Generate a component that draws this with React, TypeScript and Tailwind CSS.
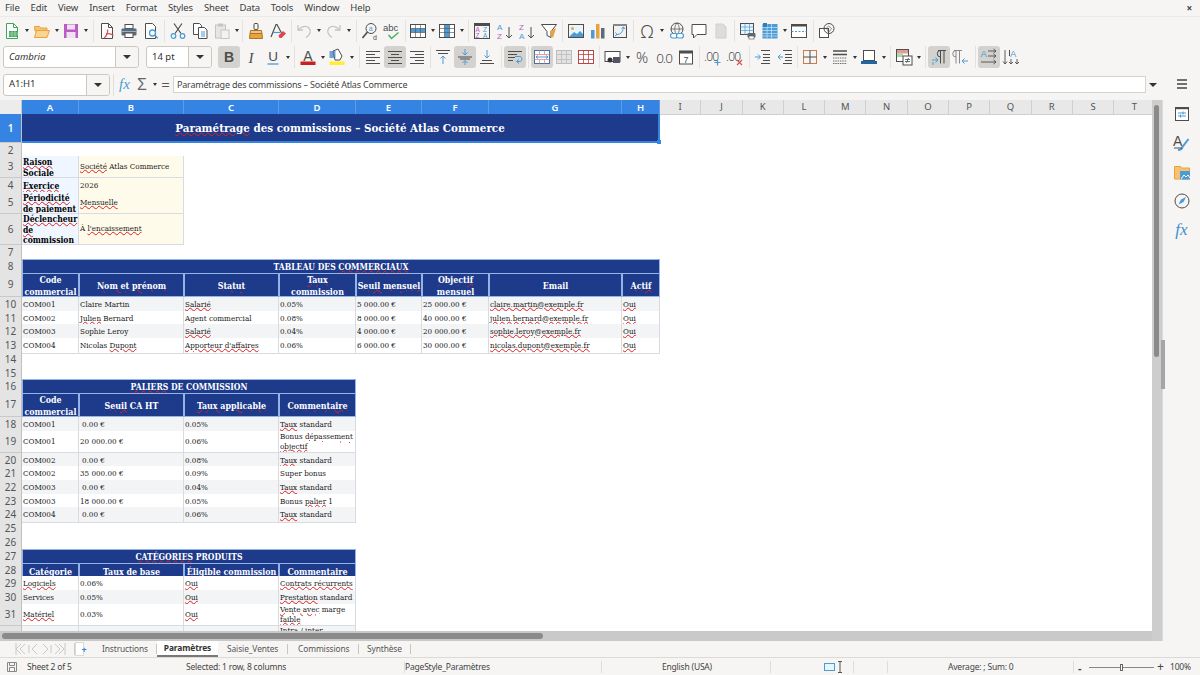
import React from "react";

const G = "#4d4d4d", B = "#4a9bd6", O = "#e8a33d", L = "#c4c4c4";

function Ic({ children, s = 18 }: { children: React.ReactNode; s?: number }) {
  return <svg width={s} height={s} viewBox="0 0 18 18" fill="none" strokeWidth="1" className="overflow-visible">{children}</svg>;
}

const icons: Record<string, React.ReactNode> = {
  new: <><path d="M3.5 1.5h7l4 4v11h-11z" stroke="#3fa45b" fill="#fff" /><path d="M10.5 1.5v4h4" stroke="#3fa45b" /><rect x="6" y="9" width="9" height="6" fill="#3fa45b" /><path d="M6 11h9M6 13h9M9 9v6M12 9v6" stroke="#bfe6c8" strokeWidth=".6" /></>,
  open: <><path d="M1.5 4.5h5l1.5 1.5h6v3h-12z" fill="#f6c272" stroke={O} /><path d="M1.5 15.5l2-7h13l-2.5 7z" fill="#fbd493" stroke={O} /></>,
  save: <><rect x="2" y="2" width="14" height="14" fill="#b95cc4" /><rect x="5" y="2.5" width="8" height="5" fill="#f3dff5" /><rect x="4.5" y="10" width="9" height="6" fill="#f3dff5" /></>,
  pdf: <><path d="M3.5 1.5h7l4 4v11h-11z" stroke={G} fill="#fff" /><path d="M10.5 1.5v4h4" stroke={G} /><path d="M6 16c3-2 4-6 3.5-8.5M8 12c2-.5 5-.5 7.5 1.5" stroke="#d9534f" strokeWidth="1.3" /></>,
  print: <><rect x="5" y="2.5" width="8" height="4" stroke={G} fill="#fff" /><rect x="1.5" y="6.5" width="15" height="7" rx="1" fill="#5e6a75" /><rect x="5" y="11" width="8" height="4.5" fill="#fff" stroke={G} /><path d="M1.5 9.5h15" stroke="#88b5d6" /></>,
  preview: <><path d="M3.5 1.5h7l3 3v12h-10z" stroke={G} fill="#fff" /><circle cx="10.5" cy="11" r="3" stroke={B} strokeWidth="1.3" /><path d="M12.7 13.2l3 3" stroke={B} strokeWidth="1.5" /></>,
  cut: <><path d="M5 1.5l7 10M13 1.5l-7 10" stroke={G} strokeWidth="1.2" /><circle cx="4.5" cy="14" r="2.3" stroke={B} strokeWidth="1.2" /><circle cx="13.5" cy="14" r="2.3" stroke={B} strokeWidth="1.2" /></>,
  copy: <><path d="M2.5 1.5h6l2 2v9h-8z" stroke={G} fill="#fff" /><path d="M7.5 5.5h6l2.5 2.5v8.500h-8.500z" stroke={G} fill="#fff" /><path d="M10 10h4M10 12h4M10 14h4" stroke={B} /></>,
  paste: <><rect x="2.500" y="3" width="10" height="13" stroke={L} fill="#e6e6e6" /><rect x="5" y="1.500" width="5" height="3" fill={L} /><rect x="8" y="8" width="8" height="8.500" fill="#f2f2f2" stroke={L} /></>,
  clone: <><rect x="7" y="1.500" width="4" height="6" rx="1" stroke={G} /><path d="M3.500 8.500h11l.5 3h-12z" fill="#f3c374" stroke="#a9762b" /><path d="M3 11.500h12l.5 5h-13z" fill={O} stroke="#a9762b" /></>,
  clear: <><path d="M2 15L7 2.500h1L13 12" stroke={G} strokeWidth="1.2" /><path d="M4 10.500h7" stroke={B} strokeWidth="1.2" /><path d="M9.500 13.500l4.500-4.500 3 2.500-4.500 4.500h-2z" fill="#e0444f" /></>,
  undo: <><path d="M3 3v5h5" stroke={L} strokeWidth="1.3" /><path d="M3.500 8C6 4.500 11 3 14 6c2.500 3 1 7-3 9.500" stroke={L} strokeWidth="1.3" /></>,
  redo: <><path d="M15 3v5h-5" stroke={L} strokeWidth="1.3" /><path d="M14.500 8C12 4.500 7 3 4 6c-2.500 3-1 7 3 9.500" stroke={L} strokeWidth="1.3" /></>,
  find: <><circle cx="10" cy="6.500" r="5" stroke={G} /><path d="M6.500 10l-5 6" stroke={G} strokeWidth="1.6" /><text x="7.800" y="9" fontSize="7" fill={B} className="font-['Liberation_Sans']">a</text><text x="12" y="17.500" fontSize="7" fill={G} className="font-['Liberation_Sans']">d</text></>,
  abc: <><text x="0" y="9" fontSize="9.500" fill={G} className="font-['Liberation_Sans']">abc</text><path d="M5.500 13l3 3.500 7-6" stroke="#4bb05f" strokeWidth="1.500" /></>,
  row: <><rect x="1.500" y="2.500" width="15" height="13" stroke={G} fill="#fff" /><rect x="2" y="6.500" width="14" height="4" fill={B} /><path d="M1.500 6.500h15M1.500 10.500h15M6.500 2.500v13M11.500 2.500v13" stroke={G} strokeWidth=".6" /></>,
  col: <><rect x="1.500" y="2.500" width="15" height="13" stroke={G} fill="#fff" /><rect x="6.500" y="3" width="5" height="12" fill={B} /><path d="M1.500 6.500h15M1.500 10.500h15M6.500 2.500v13M11.500 2.500v13" stroke={G} strokeWidth=".6" /></>,
  sort: <><rect x="1.500" y="1.500" width="15" height="15" stroke={G} /><rect x="1.500" y="1.500" width="15" height="2.500" fill={G} /><text x="2.500" y="10" fontSize="6.500" fill="#b85bc0" className="font-['Liberation_Sans']">A</text><text x="2.500" y="16" fontSize="6.500" fill="#b85bc0" className="font-['Liberation_Sans']">Z</text><text x="10" y="10" fontSize="6.500" fill={B} className="font-['Liberation_Sans']">Z</text><text x="10" y="16" fontSize="6.500" fill={B} className="font-['Liberation_Sans']">A</text></>,
  az: <><text x="1" y="8" fontSize="8" fill={B} className="font-['Liberation_Sans']">A</text><text x="1" y="16.500" fontSize="8" fill="#b85bc0" className="font-['Liberation_Sans']">Z</text><path d="M13 5v11M10 13l3 3 3-3" stroke={G} /></>,
  za: <><text x="1" y="8" fontSize="8" fill="#b85bc0" className="font-['Liberation_Sans']">Z</text><text x="1" y="16.500" fontSize="8" fill={B} className="font-['Liberation_Sans']">A</text><path d="M13 5v11M10 13l3 3 3-3" stroke={G} /></>,
  filter: <><path d="M1.500 2.500h15l-5.500 7v6l-4-2v-4z" stroke={G} fill="#fff" /><path d="M10 9l6-3-3 10-2-3z" fill={O} /></>,
  image: <><rect x="1.500" y="2.500" width="15" height="13" stroke={G} fill="#eaf4fb" /><circle cx="5.500" cy="6.500" r="1.500" fill={O} /><path d="M2 15l5-5 3 2 3-3 3 3v3z" fill={B} /></>,
  chart: <><rect x="2" y="8" width="3.500" height="8.500" fill={B} /><rect x="7" y="2" width="3.500" height="14.500" fill={O} /><rect x="12" y="6" width="3.500" height="10.500" fill="#5e6a75" /></>,
  pivot: <><rect x="2.500" y="2.500" width="13" height="13" stroke={G} fill="#f1f1f1" /><rect x="2" y="2" width="14" height="2" fill="#888" /><path d="M5.500 12.500c4 0 6-2 7-7M10.500 6.500l2-1.500 1.500 2M4.500 10.500l1.500 2-2 1.500" stroke={B} /></>,
  omega: <><text x="9" y="15.500" textAnchor="middle" fontSize="18" fill={G} className="font-['Noto_Sans'] font-light">Ω</text></>,
  link: <><circle cx="9" cy="7" r="6" stroke={G} /><path d="M3 7h12M9 1c-3 3-3 9 0 12M9 1c3 3 3 9 0 12" stroke={G} strokeWidth=".7" /><rect x="2.500" y="11.500" width="7" height="4.500" rx="2.200" stroke={B} fill="#fff" strokeWidth="1.200" /><rect x="8.500" y="11.500" width="7" height="4.500" rx="2.200" stroke={B} fill="#fff" strokeWidth="1.200" /></>,
  comment: <path d="M2 2.500h14v10H7l-3.500 3.500v-3.500H2z" stroke={G} fill="#fff" />,
  note: <path d="M4 2h7l3 3v11H4z" fill="#dcdcdc" stroke="#cfcfcf" />,
  area: <><rect x="1.500" y="1.500" width="13" height="11" stroke={G} fill="#eaf4fb" /><path d="M1.500 5h13M1.500 8.500h13M6 1.500v11M10.500 1.500v11" stroke={B} strokeWidth=".7" /><rect x="8.500" y="11" width="8" height="4.500" rx="1" fill="#5e6a75" /><rect x="10" y="14" width="5" height="3" fill="#fff" stroke={G} strokeWidth=".6" /></>,
  freeze: <><rect x="1.500" y="2" width="15" height="14.500" fill={B} /><path d="M1.500 5.500h15M1.500 8.500h15M1.500 11.500h15M1.500 14h15M6 2v14.500M10.500 2v14.500" stroke="#cfe5f5" strokeWidth=".7" /><rect x="2" y="1" width="4" height="4" fill="#2c7fb8" /></>,
  split: <><rect x="1.500" y="2.500" width="15" height="13" stroke={G} fill="#fff" /><rect x="1.500" y="2" width="15" height="2.500" fill={G} /><path d="M1.500 9.500h15" stroke={B} strokeDasharray="2 1.500" /></>,
  shape: <><rect x="1.500" y="6.500" width="9" height="9" stroke={G} fill="#fff" /><circle cx="11" cy="6.500" r="5" stroke={G} fill="none" /><path d="M8.500 6l2-2 3 2.500-3 4z" stroke={G} strokeWidth=".6" /></>,
  left: <path d="M2 3.500h14M2 6.500h9M2 9.500h14M2 12.500h9M2 15.500h14" stroke={G} />,
  center: <path d="M2 3.500h14M5 6.500h8M2 9.500h14M5 12.500h8M2 15.500h14" stroke={G} />,
  right: <path d="M2 3.500h14M7 6.500h9M2 9.500h14M7 12.500h9M2 15.500h14" stroke={G} />,
  top: <><path d="M2 2.500h14M4 5.500h10" stroke={G} /><path d="M9 16V8M6.500 10.500L9 8l2.500 2.500" stroke={B} /></>,
  mid: <><path d="M2 9h14M4 11h10" stroke={G} /><path d="M9 1v5.500M6.500 4.500L9 7l2.500-2.500M9 17v-4M6.500 15L9 12.500l2.500 2.500" stroke={B} /></>,
  bottom: <><path d="M4 12.500h10M2 15.500h14" stroke={G} /><path d="M9 2v8M6.500 7.500L9 10l2.500-2.500" stroke={B} /></>,
  wrap: <><path d="M2 3.500h14M2 6.500h9M2 9.500h7M2 12.500h5" stroke={G} /><path d="M9 9.500h5c2.500 0 2.500 5 0 5h-3M13 12.500l-2.500 2 2.500 2" stroke={B} transform="translate(0 -1)" /></>,
  merge: <><rect x="1.500" y="2.500" width="15" height="13" stroke="#4a6fa5" fill="#fff" /><path d="M1.500 6.500h15M1.500 11.500h15M6.500 2.500v4M11.500 2.500v4M6.500 11.500v4M11.500 11.500v4" stroke="#e08a8a" strokeWidth=".8" /><path d="M3 9h12M5 7.500L3 9l2 1.500M13 7.500L15 9l-2 1.500" stroke={B} /></>,
  merge2: <><rect x="1.500" y="2.500" width="15" height="13" fill="#e2e2e2" stroke="#bdbdbd" /><path d="M1.500 6.500h15M1.500 11.500h15M6.500 2.500v13M11.500 2.500v13" stroke="#bdbdbd" strokeWidth=".8" /></>,
  merge3: <><rect x="1.500" y="2.500" width="15" height="13" fill="#fff" stroke="#b44" /><path d="M1.500 6.500h15M1.500 11.500h15M6.500 2.500v13M11.500 2.500v13" stroke="#b44" strokeWidth=".8" /></>,
  curr: <><rect x="1" y="3.500" width="15" height="10" stroke={G} fill="#fff" /><circle cx="6" cy="12" r="2.500" fill="#333" /><rect x="9" y="9" width="7" height="6" fill="#556" /></>,
  pct: <text x="9" y="14.500" textAnchor="middle" fontSize="15" fill={G} className="font-['Noto_Sans'] font-light">%</text>,
  num: <text x="9" y="14.500" textAnchor="middle" fontSize="13.500" letterSpacing="-1" fill={G} className="font-['Noto_Sans'] font-light">0.0</text>,
  date: <><rect x="2.500" y="3" width="13" height="13" stroke={G} fill="#fff" /><rect x="2.500" y="3" width="13" height="2.500" fill={G} /><text x="9" y="14.500" textAnchor="middle" fontSize="9" fill={G} className="font-['Liberation_Sans']">7</text></>,
  addd: <><text x="0" y="13" fontSize="12" letterSpacing="-.8" fill={G} className="font-['Noto_Sans'] font-light">.00</text><path d="M13.500 11.500v6M10.500 14.500h6" stroke={B} strokeWidth="1.200" /></>,
  deld: <><text x="0" y="13" fontSize="12" letterSpacing="-.8" fill={G} className="font-['Noto_Sans'] font-light">.00</text><path d="M11 12l5 5M16 12l-5 5" stroke="#d9534f" strokeWidth="1.200" /></>,
  indent: <><path d="M7 2.500h9M9 6.500h7M9 9.500h7M9 12.500h7M7 15.500h9" stroke={G} /><path d="M1 9h5M4 6.500L6.500 9 4 11.500" stroke={B} /></>,
  outdent: <><path d="M7 2.500h9M9 6.500h7M9 9.500h7M9 12.500h7M7 15.500h9" stroke={G} /><path d="M7 9H2M4.500 6.500L2 9l2.500 2.500" stroke={B} /></>,
  borders: <><rect x="2.500" y="2.500" width="13" height="13" stroke="#c87d4a" /><path d="M2.500 9h13M9 2.500v13" stroke={G} /></>,
  lines: <><path d="M2 3h14M2 6.500h14" stroke={G} strokeWidth="1.500" /><path d="M2 10h14M2 13h14M2 15.500h14" stroke={G} strokeWidth=".8" strokeDasharray="1.500 .8" /></>,
  bcolor: <><rect x="3.500" y="2.500" width="11" height="10" stroke={G} fill="#fff" /><rect x="1" y="13" width="16" height="3" fill="#1f66a8" /></>,
  cond: <><rect x="1.500" y="1.500" width="12" height="12" stroke={G} fill="#fff" /><rect x="2" y="2" width="11" height="3.500" fill="#e59a9a" /><rect x="2" y="5.500" width="6" height="3.500" fill="#a7d8a7" /><rect x="8" y="8" width="9" height="9" fill="#fff" stroke={G} /><path d="M10 11.500h5M10 13.500h5M13.500 10l-2 5" stroke={G} strokeWidth=".8" /></>,
  ltr: <><path d="M8 2.500h8M10.500 2.500v13M14 2.500v13M10.500 2.500a3 3 0 000 6.500" stroke={G} /><path d="M2 12h6M5.500 9.500L8 12l-2.500 2.500M3 14v3" stroke={B} /></>,
  rtl: <><path d="M2 2.500h8M4 2.500v13M7.500 2.500v13M4 2.500a3 3 0 000 6.500" stroke="#888" /><path d="M16 13h-6M12.500 10.500L10 13l2.500 2.500" stroke={B} /></>,
  hd: <><text x="0.500" y="9" fontSize="9.500" fill={B} className="font-['Liberation_Sans']">A</text><path d="M8 3h8M13.500 1l2.500 2-2.500 2M8 8h8M13.500 6l2.500 2-2.500 2M1 14h15M13.500 12l2.500 2-2.500 2" stroke={G} strokeWidth=".9" /></>,
  vd: <><text x="8" y="9" fontSize="9.500" fill={B} className="font-['Liberation_Sans']">A</text><path d="M3 2v14M1 13.500L3 16l2-2.500M9 11v5M7 14l2 2 2-2M15 11v5M13 14l2 2 2-2" stroke={G} strokeWidth=".9" /><path d="M7.500 2v6" stroke={G} /></>,
};

icons.i = <text x="9" y="14.500" textAnchor="middle" fontSize="15" fill={G} className="font-['Liberation_Serif'] italic">I</text>;
icons.u = <><text x="9" y="13" textAnchor="middle" fontSize="13.500" fill={G} className="font-['Liberation_Sans']">U</text><path d="M3.500 16h11" stroke={B} strokeWidth="1.300" /></>;
icons.b = <text x="9" y="14" textAnchor="middle" fontSize="14" fontWeight="700" fill={G} className="font-['Liberation_Sans']">B</text>;
icons.color = <><text x="9" y="12.500" textAnchor="middle" fontSize="14" fill={G} className="font-['Liberation_Sans']">A</text><rect x="1.500" y="13.500" width="15" height="3.500" fill="#c9211e" /></>;
icons.hl = <><path d="M5 3l5-2 4 7-2 4H7z" fill="#fff" stroke={G} /><rect x="1.500" y="3" width="6" height="7" fill="#3c7fc0" opacity=".7" /><rect x="1.500" y="13.500" width="15" height="3.500" fill="#ffee33" /></>;

const row1 = ["new", "d", "open", "d:7", "save", "d", "s:6", "pdf", "print", "preview", "s", "cut", "copy", "paste", "d:7", "s", "clone", "clear", "s:4", "undo", "d", "redo", "d", "s:6", "find", "abc", "s:4", "row", "d:7", "col", "d:7", "s:6", "sort", "g", "az", "za", "filter", "s", "image", "chart", "pivot", "s", "omega", "d:7", "g", "link", "comment", "note", "s", "area", "freeze", "d:7", "split", "s:6", "shape"];
const row2a = ["i", "u", "d", "s:4", "g", "color", "d:7", "hl", "d", "s:6", "left", "center:on", "right", "s:4", "top", "mid:on", "bottom", "s:6", "wrap:on", "s", "merge:on", "merge2", "merge3", "s", "curr", "d:7", "pct", "num", "date", "s", "addd", "deld", "s:6", "indent", "outdent", "s:3", "borders", "d", "lines", "d:7", "bcolor", "d", "s", "cond", "d:7", "s:6", "ltr:on", "rtl", "s:6", "hd:on", "vd"];

function ToolRow({ items }: { items: string[] }) {
  return (
    <>
      {items.map((t, i) => {
        const [k, a] = t.split(":");
        if (k === "d") return <Dd key={i} w={a} />;
        if (k === "s") return <Sep key={i} w={a} />;
        if (k === "g") return <div key={i} className="w-px shrink-0" />;
        return (
          <div key={i} className={`flex h-[22px] w-[22px] shrink-0 items-center justify-center rounded-[3px] ${a === "on" ? "bg-[#d4d2cf]" : ""}`}>
            <Ic>{icons[k]}</Ic>
          </div>
        );
      })}
    </>
  );
}

function Dd({ w }: { w?: string }) {
  return (
    <div className={`flex shrink-0 items-center justify-center ${w === "7" ? "w-[7px]" : "w-2"}`}>
      <div className="h-0 w-0 border-x-[2.500px] border-t-[3px] border-x-transparent border-t-[#333]" />
    </div>
  );
}

function Sep({ w }: { w?: string }) {
  const c = w === "3" ? "w-[3px]" : w === "4" ? "w-1" : w === "6" ? "w-[6px]" : w === "7" ? "w-[7px]" : "w-[5px]";
  return (
    <div className={`flex h-[22px] shrink-0 justify-center ${c}`}>
      <div className="h-full w-px bg-[#e4e2df]" />
    </div>
  );
}

function Caret() {
  return <div className="h-0 w-0 border-x-[4px] border-t-[4px] border-x-transparent border-t-[#333]" />;
}

function Combo({ text, w, bw, italic, tw }: { text: string; w: string; bw: string; italic?: boolean; tw: string }) {
  return (
    <div className={`flex h-[22px] shrink-0 rounded-[3px] border border-[#cdc7c2] bg-white ${w}`}>
      <div className={`flex items-center pl-[5px] text-[9.500px] text-[#333] ${tw} ${italic ? "italic" : ""}`}>{text}</div>
      <div className={`flex items-center justify-center rounded-r-[3px] border-l border-[#cdc7c2] bg-[#f6f5f4] ${bw}`}><Caret /></div>
    </div>
  );
}

function spell(s: string) {
  return s.split("~").map((p, i) =>
    i % 2 ? <span key={i} className="underline decoration-[#e02020] decoration-wavy decoration-[0.6px] underline-offset-[0px]">{p}</span> : <React.Fragment key={i}>{p}</React.Fragment>
  );
}

const GRID = "grid grid-cols-[22px_57px_105px_95px_77px_66px_67px_133px_38px]";
const SERIF = "font-['DejaVu_Serif_Condensed','Liberation_Serif',serif]";

function Head({ n, on }: { n: number; on?: boolean }) {
  return (
    <div className={`flex items-center justify-center border-b border-r border-b-[#c9c9c9] border-r-[#c0c0c0] font-['Noto_Sans'] text-[10px] ${on ? "bg-[#3584e4] font-semibold text-white" : "bg-[#e4e4e4] text-[#555]"}`}>{n}</div>
  );
}

function Cell({ t, k = "d", alt, span }: { t?: string; k?: string; alt?: boolean; span?: string }) {
  const base = `overflow-hidden ${SERIF} leading-[10.500px] `;
  if (k === "s")
    return <div className={`${base} flex items-center justify-center border border-[#93b4e6] bg-[#1e3a8a] text-center text-[8.500px] font-bold text-white ${span ?? ""}`}><span>{spell(t ?? "")}</span></div>;
  if (k === "h")
    return <div className={`${base} flex items-center justify-center border border-[#93b4e6] bg-[#1e3a8a] pt-[1px] text-center text-[8.800px] font-bold leading-[12px] text-white ${span ?? ""}`}><span>{spell(t ?? "")}</span></div>;
  if (k === "l")
    return <div className={`${base} flex items-center border-b border-r border-[#d8dce2] bg-[#eff6ff] pl-[1px] pt-[2px] text-[8.500px] font-bold text-black`}><span>{spell(t ?? "")}</span></div>;
  const bg = k === "v" ? "bg-[#fffbeb]" : alt ? "bg-[#f3f4f6]" : "bg-white";
  return <div className={`${base} flex items-center border-b border-r border-[#d8dce2] pl-[1px] pt-[1px] text-[8px] text-[#1a1a1a] ${bg} ${k === "r" ? "pl-[3px]" : ""}`}><span>{spell(t ?? "")}</span></div>;
}

function R({ n, h, on, children }: { n: number; h: string; on?: boolean; children?: React.ReactNode }) {
  return (
    <div className={`${GRID} ${h} shrink-0`}>
      <Head n={n} on={on} />
      {children}
    </div>
  );
}

function Cells({ v, alt, h }: { v: string[]; alt?: boolean; h?: boolean }) {
  return <>{v.map((t, i) => <Cell key={i} t={t} alt={alt} k={h ? "h" : t.startsWith(" ") ? "r" : "d"} />)}</>;
}

const colLabels = ["A", "B", "C", "D", "E", "F", "G", "H"];
const colRest = ["I", "J", "K", "L", "M", "N", "O", "P", "Q", "R", "S", "T"];

function Sheet() {
  return (
    <div className="flex min-h-0 flex-1 flex-col overflow-hidden bg-white">
      <div className="grid h-[14px] shrink-0 grid-cols-[22px_57px_105px_95px_77px_66px_67px_133px_38px_repeat(12,41.300px)] font-['Noto_Sans'] text-[9.500px]">
        <div className="border-b border-r border-[#c9c9c9] bg-[#ececec]" />
        {colLabels.map(c => <div key={c} className="flex items-center justify-center border-r border-[#5c9bea] bg-[#3584e4] font-semibold text-white">{c}</div>)}
        {colRest.map(c => <div key={c} className="flex items-center justify-center border-b border-r border-[#cfcfcf] bg-[#e8e8e8] text-[#555]">{c}</div>)}
      </div>

      <R n={1} h="h-[29px]" on>
        <div className={`relative col-span-8 flex items-center justify-center border-b-2 border-r-2 border-[#3584e4] bg-[#1e3a8a] pt-[2px] ${SERIF} text-[11.500px] font-bold text-white`}>
          <span>{spell("~Paramétrage~ des commissions – Société Atlas Commerce")}</span>
          <div className="absolute bottom-[-3px] right-[-3px] h-[4px] w-[4px] bg-[#3584e4]" />
        </div>
      </R>
      <R n={2} h="h-[13px]" />
      <R n={3} h="h-[22px]"><Cell k="l" t="~Raison~ ~Sociale~" /><Cell k="v" t="~Société~ Atlas Commerce" /></R>
      <R n={4} h="h-[14px]"><Cell k="l" t="~Exercice~" /><Cell k="v" t="2026" /></R>
      <R n={5} h="h-[22px]"><Cell k="l" t="~Périodicité~ ~de paiement~" /><Cell k="v" t="~Mensuelle~" /></R>
      <R n={6} h="h-[31px]"><Cell k="l" t="~Déclencheur~ ~de~ commission" /><Cell k="v" t="À ~l'encaissement~" /></R>
      <R n={7} h="h-[14px]" />
      <R n={8} h="h-[14px]"><Cell k="s" span="col-span-8" t="TABLEAU DES ~COMMERCIAUX~" /></R>
      <R n={9} h="h-[24px]"><Cells h v={["Code commercial", "~Nom et prénom~", "~Statut~", "~Taux~ commission", "~Seuil\u00a0mensuel~", "~Objectif mensuel~", "Email", "~Actif~"]} /></R>
      <R n={10} h="h-[14px]"><Cells alt v={["COM001", "Claire Martin", "~Salarié~", "0.05%", "5 000.00 €", "25 000.00 €", "~claire.martin@exemple.fr~", "~Oui~"]} /></R>
      <R n={11} h="h-[13px]"><Cells v={["COM002", "~Julien~ Bernard", "Agent commercial", "0.08%", "8 000.00 €", "40 000.00 €", "~julien.bernard@exemple.fr~", "~Oui~"]} /></R>
      <R n={12} h="h-[14px]"><Cells alt v={["COM003", "Sophie Leroy", "~Salarié~", "0.04%", "4 000.00 €", "20 000.00 €", "~sophie.leroy@exemple.fr~", "~Oui~"]} /></R>
      <R n={13} h="h-[14px]"><Cells v={["COM004", "Nicolas ~Dupont~", "~Apporteur d'affaires~", "0.06%", "6 000.00 €", "30 000.00 €", "~nicolas.dupont@exemple.fr~", "~Oui~"]} /></R>
      <R n={14} h="h-[14px]" />
      <R n={15} h="h-[13px]" />
      <R n={16} h="h-[14px]"><Cell k="s" span="col-span-4" t="~PALIERS~ DE COMMISSION" /></R>
      <R n={17} h="h-[24px]"><Cells h v={["Code commercial", "~Seuil~ CA HT", "~Taux applicable~", "~Commentaire~"]} /></R>
      <R n={18} h="h-[14px]"><Cells alt v={["COM001", " 0.00 €", "0.05%", "~Taux~ standard"]} /></R>
      <R n={19} h="h-[22px]"><Cells v={["COM001", "20 000.00 €", "0.06%", "Bonus\u00a0~dépassement~ ~objectif~"]} /></R>
      <R n={20} h="h-[13px]"><Cells alt v={["COM002", " 0.00 €", "0.08%", "~Taux~ standard"]} /></R>
      <R n={21} h="h-[14px]"><Cells v={["COM002", "35 000.00 €", "0.09%", "Super bonus"]} /></R>
      <R n={22} h="h-[14px]"><Cells alt v={["COM003", " 0.00 €", "0.04%", "~Taux~ standard"]} /></R>
      <R n={23} h="h-[13px]"><Cells v={["COM003", "18 000.00 €", "0.05%", "Bonus ~palier~ 1"]} /></R>
      <R n={24} h="h-[14px]"><Cells alt v={["COM004", " 0.00 €", "0.06%", "~Taux~ standard"]} /></R>
      <R n={25} h="h-[14px]" />
      <R n={26} h="h-[14px]" />
      <R n={27} h="h-[14px]"><Cell k="s" span="col-span-4" t="~CATÉGORIES~ PRODUITS" /></R>
      <R n={28} h="h-[13px]"><Cells h v={["~Catégorie~", "~Taux de base~", "~Éligible~\u00a0commission", "~Commentaire~"]} /></R>
      <R n={29} h="h-[14px]"><Cells v={["~Logiciels~", "0.06%", "~Oui~", "~Contrats récurrents~"]} /></R>
      <R n={30} h="h-[14px]"><Cells alt v={["Services", "0.05%", "~Oui~", "~Prestation~ standard"]} /></R>
      <R n={31} h="h-[22px]"><Cells v={["~Matériel~", "0.03%", "~Oui~", "~Vente avec~ marge ~faible~"]} /></R>
      <div className={`${GRID} h-[31px] shrink-0`}>
        <Head n={32} />
        <Cell alt />
        <Cell alt />
        <Cell alt />
        <div className={`overflow-hidden border-b border-r border-[#d8dce2] bg-[#f3f4f6] pl-[1px] ${SERIF} text-[8px] leading-[10.500px] text-[#1a1a1a]`}>Intra / inter</div>
      </div>
    </div>
  );
}

function TabSep() {
  return <div className="h-[10px] w-px shrink-0 bg-[#c8c6c3]" />;
}

function Nav({ d }: { d: string }) {
  return <svg width="13" height="14" viewBox="0 0 13 14" fill="none" stroke="#c9c9c9"><path d={d} /></svg>;
}

export default function App() {
  return (
    <div className="flex h-[675px] w-[1200px] flex-col overflow-hidden bg-[#f6f5f4] font-['Noto_Sans'] text-[#3d3d3d]">
      {/* menu */}
      <div className="flex h-[17px] shrink-0 items-center border-b border-[#eceae8] pl-[5px] pr-[8px] pt-[1px] text-[9.500px] tracking-[-0.15px]">
        <div className="flex gap-[11px]">
          {["File", "Edit", "View", "Insert", "Format", "Styles", "Sheet", "Data", "Tools", "Window", "Help"].map(m => <span key={m}>{m}</span>)}
        </div>
        <span className="ml-auto text-[10px] font-bold">×</span>
      </div>
      {/* toolbar 1 */}
      <div className="flex h-[27px] shrink-0 items-center pl-px"><ToolRow items={row1} /></div>
      {/* toolbar 2 */}
      <div className="flex h-[26px] shrink-0 items-center pl-[3px]">
        <Combo text="Cambria" w="w-[136px]" bw="w-[23px]" tw="w-[112px]" italic />
        <div className="w-[7px] shrink-0" />
        <Combo text="14 pt" w="w-[66px]" bw="w-[23px]" tw="w-[42px]" />
        <div className="w-[6px] shrink-0" />
        <ToolRow items={["b:on"]} />
        <ToolRow items={row2a} />
      </div>
      {/* formula */}
      <div className="flex h-[30px] shrink-0 items-center pb-[1px] pl-[3px]">
        <Combo text="A1:H1" w="w-[107px]" bw="w-[23px]" tw="w-[83px]" />
        <div className="ml-[3px] h-[22px] w-px bg-[#e0dedb]" />
        <div className="flex w-[19px] justify-center pl-[2px] font-['Liberation_Serif'] text-[15px] italic text-[#4a9bd6]">fx</div>
        <div className="flex w-[18px] justify-center font-['Liberation_Sans'] text-[16px] text-[#666]">Σ</div>
        <Dd w="7" />
        <div className="flex w-[15px] justify-center text-[15px] text-[#555]">=</div>
        <div className="flex h-[17px] w-[973px] items-center border border-[#d6d3cf] bg-white pl-[3px] text-[9px] tracking-[-0.2px] text-[#444]">Paramétrage des commissions – Société Atlas Commerce</div>
        <div className="flex w-[13px] justify-center"><Caret /></div>
      </div>
      {/* middle */}
      <div className="flex min-h-0 flex-1">
        <div className="flex w-[1152px] min-w-0 flex-col">
          <Sheet />
          <div className="flex h-[10px] shrink-0 items-center bg-[#c9c9c9] pl-[2px]"><div className="h-[6px] w-[541px] rounded-[3px] bg-[#8a8a8a]" /></div>
        </div>
        <div className="relative w-[10px] shrink-0 bg-[#cdcdcd]">
          <div className="ml-[2px] mt-[5px] h-[252px] w-[5px] rounded-[3px] bg-[#8a8a8a]" />
          <div className="absolute left-[9px] top-[240px] h-[49px] w-[4px] bg-[#a5a5a5]" />
        </div>
        <div className="flex w-[38px] shrink-0 flex-col items-center border-l border-[#dcdad7]">
          <div className="-mt-[23px] flex flex-col items-center">
            <svg width="14" height="14" viewBox="0 0 14 14" stroke="#444" strokeWidth="1.300"><path d="M2 3h10M2 7h10M2 11h10" /></svg>
            <div className="mt-[14px] flex flex-col items-center gap-[11px]">
              <Ic><rect x="2.500" y="2.500" width="13" height="13" stroke={G} fill="#fff" /><rect x="2" y="2" width="14" height="2.200" fill={G} /><path d="M5 8h8M5 11h8M10 6.500v3M7.500 9.500v3" stroke={B} /></Ic>
              <Ic><text x="0" y="12" fontSize="14" fill={G} className="font-['Liberation_Sans']">A</text><path d="M5 16c2 0 4-1 4.500-3l6-8" stroke={B} strokeWidth="2" /><path d="M1 14h8" stroke={G} /></Ic>
              <Ic><path d="M1.500 3.500h6l1 1.500h8v11h-15z" fill="#f6c272" stroke={O} /><rect x="7" y="8" width="10" height="8.500" fill={B} /><path d="M8 16l3-4 2 2 2-2 2 3" stroke="#fff" /></Ic>
              <Ic><circle cx="9" cy="9" r="7" stroke={G} /><path d="M5.500 12.500L8 7.500l5-2.500-2.500 5z" fill={B} /></Ic>
              <div className="font-['Liberation_Serif'] text-[17px] italic leading-[18px] text-[#3d8fd1]">fx</div>
            </div>
          </div>
        </div>
      </div>
      {/* tabs */}
      <div className="flex h-[16px] shrink-0 items-center whitespace-nowrap text-[8.400px] tracking-[-0.1px] text-[#555]">
        <div className="flex w-[66px] items-center justify-end">
          <Nav d="M2 1v12M7 2L2 7l5 5M11 2L6 7l5 5" /><Nav d="M10 2L5 7l5 5M2 3v8" /><Nav d="M3 2l5 5-5 5M11 3v8" /><Nav d="M2 2l5 5-5 5M6 2l5 5-5 5M12 1v12" />
        </div>
        <div className="ml-[8px] h-[12px] w-px bg-[#cfcdca]" />
        <div className="h-[14px] w-[9px] border border-[#dcdad7] bg-white" />
        <div className="ml-[-3px] w-[6px] text-center text-[9px] font-bold leading-none text-[#3584e4]">+</div>
        <span className="ml-[15px] w-[44px] pt-[1px]">Instructions</span>
        <div className="ml-[10px]"><TabSep /></div>
        <div className="flex h-full w-[61px] items-center justify-center border-b-2 border-[#777] bg-white pt-[1px] font-bold text-[#333]">Paramètres</div>
        <span className="ml-[9px] w-[51px] pt-[1px]">Saisie_Ventes</span>
        <div className="ml-[9px]"><TabSep /></div>
        <span className="ml-[10px] w-[49px] pt-[1px]">Commissions</span>
        <div className="ml-[11px]"><TabSep /></div>
        <span className="ml-[8px] w-[33px] pt-[1px]">Synthèse</span>
        <div className="ml-[10px]"><TabSep /></div>
      </div>
      {/* status */}
      <div className="flex h-[18px] shrink-0 items-center whitespace-nowrap border-t border-[#dcdad7] pt-[1px] text-[8.500px] tracking-[-0.2px] text-[#444]">
        <div className="flex w-[27px] justify-center pr-[3px]"><svg width="12" height="12" viewBox="0 0 12 12" fill="none" stroke="#888"><path d="M1.500 1.500h9v9h-9zM3.500 1.500v3h5v-3M3.500 10.500v-4h5v4" /></svg></div>
        <div className="w-[159px]">Sheet 2 of 5</div>
        <div className="w-[218px]">Selected: 1 row, 8 columns</div>
        <div className="w-[197px] border-l border-[#e0dedb]">PageStyle_Paramètres</div>
        <div className="w-[169px] border-l border-[#e0dedb] pl-[60px]">English (USA)</div>
        <div className="flex w-[83px] items-center border-l border-[#e0dedb] pl-[53px]">
          <div className="h-[8px] w-[11px] border border-[#4a9bd6] bg-[#eaf4fb]" />
          <svg className="ml-[2px]" width="6" height="12" viewBox="0 0 6 12" stroke="#555" fill="none"><path d="M1 .5h4M1 11.500h4M3 .5v11" /></svg>
        </div>
        <div className="w-[34px] border-l border-[#e0dedb]">&nbsp;</div>
        <div className="w-[186px] border-l border-[#e0dedb] pl-[60px]">Average: ; Sum: 0</div>
        <div className="flex w-[94px] items-center border-l border-[#e0dedb] pl-[4px]">
          <span className="w-[8px] text-[11px] font-bold leading-none">-</span>
          <div className="relative mx-[3px] h-px w-[65px] bg-[#888]"><div className="absolute left-[31px] top-[-3px] h-[7px] w-[3px] border border-[#666] bg-white" /></div>
          <span className="text-[12px] leading-none">+</span>
        </div>
        <div className="pl-[3px]">100%</div>
      </div>
    </div>
  );
}
